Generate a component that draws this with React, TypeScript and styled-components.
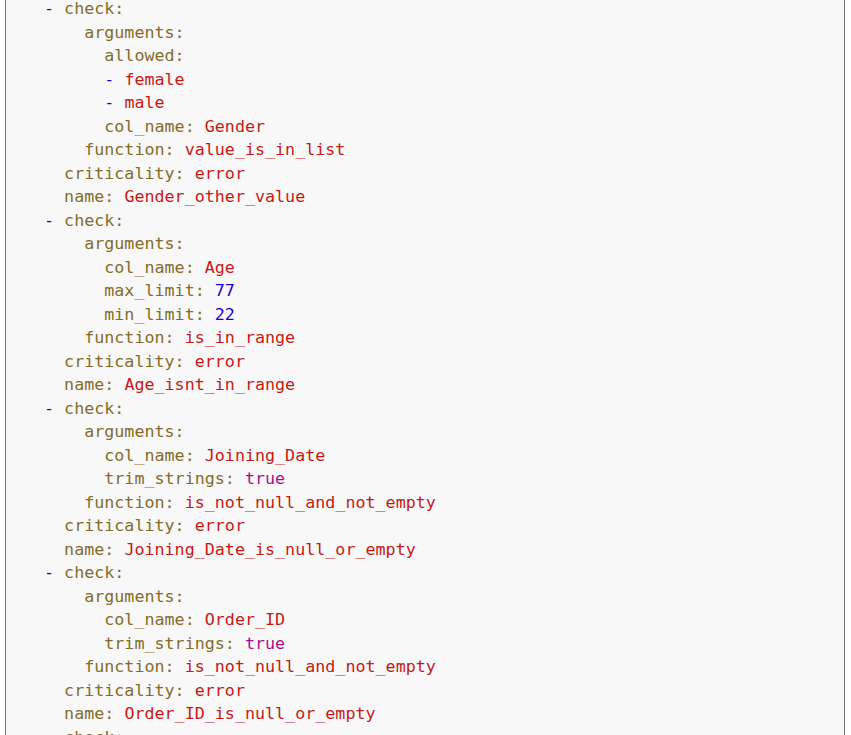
import React from "react";
import styled, { createGlobalStyle } from "styled-components";

const GlobalStyle = createGlobalStyle`
  html, body {
    margin: 0;
    padding: 0;
    background: #ffffff;
    overflow: hidden;
  }
  body {
    font-family: "DejaVu Sans Mono", "Liberation Mono", monospace;
  }
`;

const Viewport = styled.div`
  height: 735px;
  overflow: hidden;
`;

const CodeBlock = styled.pre`
  margin: -2.8px 6px 0 5px;
  padding: 0 0 0 38px;
  background: #f8f8f8;
  border-left: 1px solid #737373;
  border-right: 1px solid #737373;
  font-family: "DejaVu Sans Mono", "Liberation Mono", monospace;
  font-size: 16.7px;
  line-height: 23.5px;
  color: #000;
  white-space: pre;
  min-height: 800px;
`;

const Line = styled.div`
  height: 23.5px;
`;

type Kind = "attr" | "str" | "num" | "lit" | "bullet" | "plain";

const colors: Record<Kind, string> = {
  attr: "#836c28",
  str: "#c41a16",
  num: "#1c00cf",
  lit: "#aa0d91",
  bullet: "#1c00cf",
  plain: "#000000",
};

const Token = styled.span<{ $kind: Kind }>`
  color: ${(p) => colors[p.$kind]};
`;

type Tok = [Kind, string];
type Row = { indent: number; toks: Tok[] };

const kv = (indent: number, key: string, kind: Kind, value: string): Row => ({
  indent,
  toks: [
    ["attr", key + ": "],
    [kind, value],
  ],
});
const k = (indent: number, key: string): Row => ({ indent, toks: [["attr", key + ":"]] });
const item = (indent: number, kind: Kind, value: string): Row => ({
  indent,
  toks: [
    ["bullet", "-"],
    ["plain", " "],
    [kind, value],
  ],
});
const check = (): Row => ({
  indent: 0,
  toks: [
    ["bullet", "-"],
    ["plain", " "],
    ["attr", "check:"],
  ],
});

const rows: Row[] = [
  check(),
  k(4, "arguments"),
  k(6, "allowed"),
  item(6, "str", "female"),
  item(6, "str", "male"),
  kv(6, "col_name", "str", "Gender"),
  kv(4, "function", "str", "value_is_in_list"),
  kv(2, "criticality", "str", "error"),
  kv(2, "name", "str", "Gender_other_value"),
  check(),
  k(4, "arguments"),
  kv(6, "col_name", "str", "Age"),
  kv(6, "max_limit", "num", "77"),
  kv(6, "min_limit", "num", "22"),
  kv(4, "function", "str", "is_in_range"),
  kv(2, "criticality", "str", "error"),
  kv(2, "name", "str", "Age_isnt_in_range"),
  check(),
  k(4, "arguments"),
  kv(6, "col_name", "str", "Joining_Date"),
  kv(6, "trim_strings", "lit", "true"),
  kv(4, "function", "str", "is_not_null_and_not_empty"),
  kv(2, "criticality", "str", "error"),
  kv(2, "name", "str", "Joining_Date_is_null_or_empty"),
  check(),
  k(4, "arguments"),
  kv(6, "col_name", "str", "Order_ID"),
  kv(6, "trim_strings", "lit", "true"),
  kv(4, "function", "str", "is_not_null_and_not_empty"),
  kv(2, "criticality", "str", "error"),
  kv(2, "name", "str", "Order_ID_is_null_or_empty"),
  check(),
  k(4, "arguments"),
];

export default function App() {
  return (
    <Viewport>
      <GlobalStyle />
      <CodeBlock>
        {rows.map((r, i) => (
          <Line key={i}>
            {" ".repeat(r.indent)}
            {r.toks.map(([kind, text], j) => (
              <Token key={j} $kind={kind}>
                {text}
              </Token>
            ))}
          </Line>
        ))}
      </CodeBlock>
    </Viewport>
  );
}
